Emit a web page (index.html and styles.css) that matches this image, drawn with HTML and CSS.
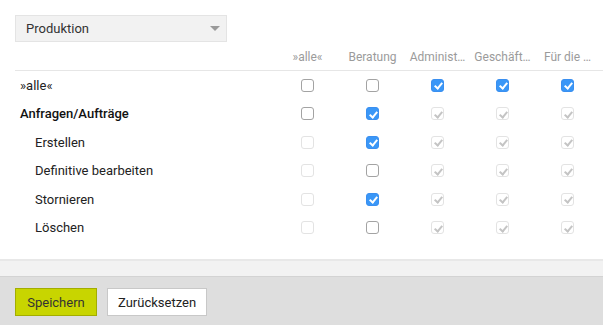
FILE: index.html
```html
<!DOCTYPE html>
<html lang="de">
<head>
  <meta charset="UTF-8" />
  <title>Rechte | Produktion</title>
  <link rel="stylesheet" href="styles.css">
</head>
<body>
  <main class="content">
    <div class="select">
      <span>Produktion</span>
      <span class="arrow"></span>
    </div>

    <div class="matrix">
      <div class="row head">
        <div></div>
        <div class="col">»alle«</div>
        <div class="col">Beratung</div>
        <div class="col" title="Administration">Administ…</div>
        <div class="col" title="Geschäftsleitung">Geschäft…</div>
        <div class="col" title="Für die Produktion">Für die …</div>
      </div>

      <div class="row first">
        <div class="label">»alle«</div>
        <div class="cell"><span class="cb"></span></div>
        <div class="cell"><span class="cb"></span></div>
        <div class="cell"><span class="cb on"></span></div>
        <div class="cell"><span class="cb on"></span></div>
        <div class="cell"><span class="cb on"></span></div>
      </div>

      <div class="row section">
        <div class="label">Anfragen/Aufträge</div>
        <div class="cell"><span class="cb"></span></div>
        <div class="cell"><span class="cb on"></span></div>
        <div class="cell"><span class="cb off on"></span></div>
        <div class="cell"><span class="cb off on"></span></div>
        <div class="cell"><span class="cb off on"></span></div>
      </div>

      <div class="row child">
        <div class="label">Erstellen</div>
        <div class="cell"><span class="cb off"></span></div>
        <div class="cell"><span class="cb on"></span></div>
        <div class="cell"><span class="cb off on"></span></div>
        <div class="cell"><span class="cb off on"></span></div>
        <div class="cell"><span class="cb off on"></span></div>
      </div>

      <div class="row child">
        <div class="label">Definitive bearbeiten</div>
        <div class="cell"><span class="cb off"></span></div>
        <div class="cell"><span class="cb"></span></div>
        <div class="cell"><span class="cb off on"></span></div>
        <div class="cell"><span class="cb off on"></span></div>
        <div class="cell"><span class="cb off on"></span></div>
      </div>

      <div class="row child">
        <div class="label">Stornieren</div>
        <div class="cell"><span class="cb off"></span></div>
        <div class="cell"><span class="cb on"></span></div>
        <div class="cell"><span class="cb off on"></span></div>
        <div class="cell"><span class="cb off on"></span></div>
        <div class="cell"><span class="cb off on"></span></div>
      </div>

      <div class="row child">
        <div class="label">Löschen</div>
        <div class="cell"><span class="cb off"></span></div>
        <div class="cell"><span class="cb"></span></div>
        <div class="cell"><span class="cb off on"></span></div>
        <div class="cell"><span class="cb off on"></span></div>
        <div class="cell"><span class="cb off on"></span></div>
      </div>
    </div>
  </main>

  <div class="strip"></div>

  <footer class="actions">
    <button class="btn primary">Speichern</button>
    <button class="btn">Zurücksetzen</button>
  </footer>
</body>
</html>
```

FILE: styles.css
```css
/* Global */
* {
  margin: 0;
  padding: 0;
  box-sizing: border-box;
}

body {
  font-family: Roboto, "Liberation Sans", sans-serif;
  font-size: 13px;
  color: #222;
  background: #fff;
}

/* Content */
.content {
  padding: 15px 0 17px 15px;
}

.select {
  width: 212px;
  height: 27px;
  background: #f2f2f2;
  border: 1px solid #e4e4e4;
  display: flex;
  align-items: center;
  justify-content: space-between;
  padding: 0 6px 0 10px;
  color: #333;
}

.select .arrow {
  width: 0;
  height: 0;
  border-left: 5px solid transparent;
  border-right: 5px solid transparent;
  border-top: 5px solid #9a9a9a;
}

/* Permission matrix */
.row {
  display: grid;
  grid-template-columns: 1fr repeat(5, 65px);
  padding-right: 3px;
  height: 28.5px;
  align-items: center;
}

.row.head {
  height: 29px;
  align-items: end;
  padding-bottom: 6px;
  border-bottom: 1px solid #e6e6e6;
  color: #9b9b9b;
  font-size: 12px;
}

.row.head .col {
  text-align: center;
  white-space: nowrap;
}

.row.first {
  height: 28px;
}

.row.section {
  height: 29px;
}

.label {
  padding-left: 5px;
}

.section .label {
  font-weight: 500;
  color: #111;
}

.child .label {
  padding-left: 20px;
}

.cell {
  display: flex;
  justify-content: center;
}

/* Checkboxes */
.cb {
  position: relative;
  width: 13px;
  height: 13px;
  border: 1px solid #a3a3a3;
  border-radius: 3px;
  background: #fff;
}

.cb.on {
  background: #3a97f7;
  border-color: #3a8ff0;
}

.cb.on::after {
  content: "";
  position: absolute;
  left: 4px;
  top: 1.5px;
  width: 3px;
  height: 6px;
  border-right: 2px solid #fff;
  border-bottom: 2px solid #fff;
  transform: rotate(40deg);
}

.cb.off {
  border-color: #e3e3e3;
  background: #fff;
}

.cb.off.on::after {
  border-color: #c4c4c4;
}

/* Footer */
.strip {
  height: 18px;
  background: #f2f2f2;
  border-top: 2px solid #e8e8e8;
  border-bottom: 1px solid #d3d3d3;
}

.actions {
  background: #dedede;
  height: 48px;
  padding: 11px 15px 0;
  display: flex;
  align-items: flex-start;
  gap: 10px;
}

.btn {
  height: 28px;
  padding: 0 10px;
  font-family: inherit;
  font-size: 13px;
  color: #222;
  background: #fff;
  border: 1px solid #c8c8c8;
  cursor: pointer;
}

.btn.primary {
  width: 82px;
  background: #c8d500;
  border-color: #a3ad00;
  color: #333;
}
```
